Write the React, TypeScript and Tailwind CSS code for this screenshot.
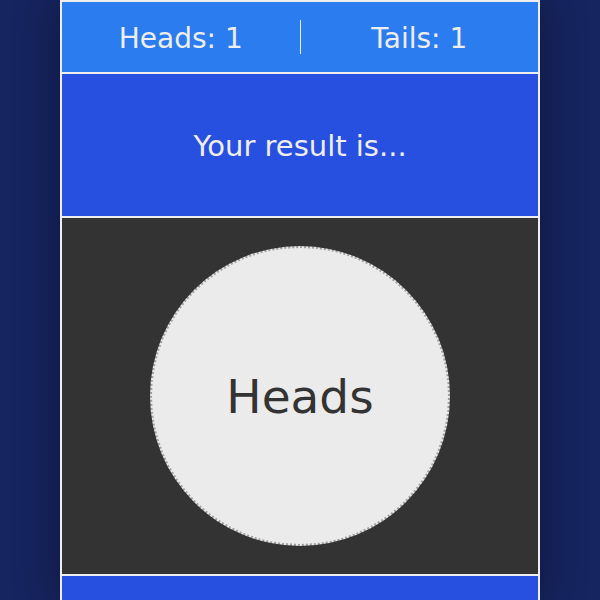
export default function App() {
  return (
    <div
      className="min-h-[600px] h-[600px] overflow-hidden bg-[#16245f] flex justify-center"
      style={{ fontFamily: '"DejaVu Sans", Verdana, sans-serif' }}
    >
      <div className="w-[480px] border-2 border-b-0 border-[#eeeeee] flex flex-col shadow-[0_0_40px_rgba(0,0,0,0.35)] bg-[#2850e0]">
        {/* score bar */}
        <div className="h-[70px] shrink-0 bg-[#2b7cef] flex items-center text-[28px] text-[#eeeeee]">
          <div className="flex-1 text-center pt-[3px]">Heads: 1</div>
          <div className="w-px h-[34px] bg-[#eeeeee]" />
          <div className="flex-1 text-center pt-[3px]">Tails: 1</div>
        </div>
        <div className="h-[2px] shrink-0 bg-[#eeeeee]" />

        {/* result text */}
        <div className="h-[142px] shrink-0 bg-[#2850e0] flex items-center justify-center pt-[3px] text-[29px] text-[#eeeeee]">
          Your result is...
        </div>
        <div className="h-[2px] shrink-0 bg-[#eeeeee]" />

        {/* coin */}
        <div className="h-[356px] shrink-0 bg-[#333333] flex items-center justify-center">
          <div className="w-[300px] h-[300px] rounded-full bg-[#ebebeb] border-2 border-dotted border-[#a0a0a0] flex items-center justify-center pt-[3px] text-[47px] text-[#333333]">
            Heads
          </div>
        </div>
        <div className="h-[2px] shrink-0 bg-[#eeeeee]" />

        <div className="flex-1 bg-[#2850e0]" />
      </div>
    </div>
  );
}
